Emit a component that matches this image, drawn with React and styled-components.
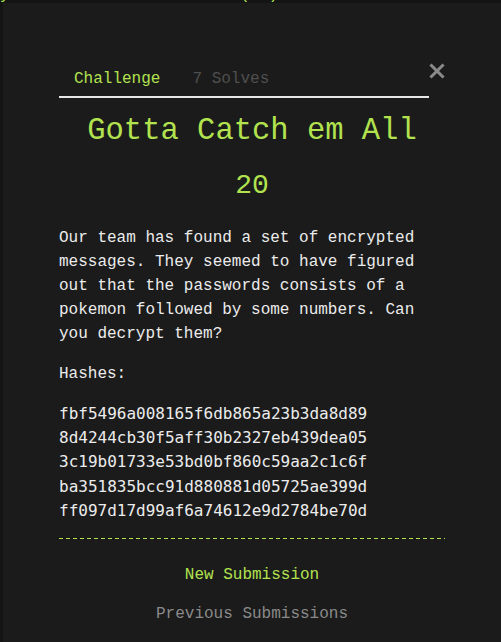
import styled, { createGlobalStyle } from "styled-components";

const GlobalStyle = createGlobalStyle`
  html, body {
    margin: 0;
    padding: 0;
    background: #141414;
    overflow: hidden;
  }
  body {
    font-family: "Liberation Mono", "DejaVu Sans Mono", monospace;
    color: #e8e8e8;
  }
`;

const green = "#b2e34f";

const BehindLine = styled.div`
  height: 3px;
  overflow: hidden;
  color: ${green};
  font-size: 16px;
  line-height: 16px;
  white-space: nowrap;

  span {
    display: block;
    margin-top: -13px;
  }
`;

const Modal = styled.div`
  margin-left: 3px;
  background: #1b1b1b;
  min-height: 642px;
  padding: 57px 56px 0 56px;
  box-sizing: border-box;
`;

const Header = styled.div`
  display: flex;
  align-items: flex-start;
`;

const Tabs = styled.nav`
  flex: 1;
  display: flex;
  gap: 32px;
  padding-left: 15px;
  height: 38px;
  border-bottom: 2px solid #e6e6e6;
  box-sizing: border-box;
`;

const Tab = styled.span`
  font-size: 16px;
  line-height: 38px;
  color: ${({ $active }) => ($active ? green : "#4f4f4f")};
`;

const Close = styled.button`
  background: none;
  border: none;
  padding: 0;
  margin: 3px 0 0 0;
  width: 16px;
  height: 16px;
  color: #8a8a8a;
  display: flex;
`;

const Title = styled.h1`
  margin: 15px 0 0 0;
  text-align: center;
  font-weight: normal;
  font-size: 30.5px;
  line-height: 36px;
  color: ${green};
`;

const Points = styled.div`
  margin-top: 19px;
  text-align: center;
  font-size: 28px;
  line-height: 36px;
  color: ${green};
`;

const Body = styled.div`
  margin-top: 22px;
  font-size: 16px;
  line-height: 24px;
  color: #ececec;

  p {
    margin: 0 0 16px 0;
  }
`;

const Hashes = styled.div`
  margin-top: 13px;
  font-family: "DejaVu Sans Mono", monospace;
  font-size: 16px;
  line-height: 24.2px;
  color: #ececec;
`;

const Dashed = styled.div`
  margin-top: 15px;
  height: 1px;
  background-image: linear-gradient(to right, ${green} 4px, transparent 4px);
  background-size: 7px 1px;
  background-repeat: repeat-x;
`;

const Actions = styled.div`
  display: flex;
  flex-direction: column;
  align-items: center;
  gap: 15px;
  margin-top: 24px;
`;

const Action = styled.button`
  background: none;
  border: none;
  padding: 0;
  font-family: inherit;
  font-size: 16px;
  line-height: 24px;
  color: ${({ $primary }) => ($primary ? green : "#8a8a8a")};
`;

const hashes = [
  "fbf5496a008165f6db865a23b3da8d89",
  "8d4244cb30f5aff30b2327eb439dea05",
  "3c19b01733e53bd0bf860c59aa2c1c6f",
  "ba351835bcc91d880881d05725ae399d",
  "ff097d17d99af6a74612e9d2784be70d",
];

export default function App() {
  return (
    <>
      <GlobalStyle />
      <BehindLine>
        <span>y the shelf and the door (50)</span>
      </BehindLine>
      <Modal>
        <Header>
          <Tabs>
            <Tab $active>Challenge</Tab>
            <Tab>7 Solves</Tab>
          </Tabs>
          <Close aria-label="close">
            <svg width="16" height="16" viewBox="0 0 16 16">
              <path
                d="M2.5 2.5 L13.5 13.5 M13.5 2.5 L2.5 13.5"
                stroke="currentColor"
                strokeWidth="3"
                strokeLinecap="square"
              />
            </svg>
          </Close>
        </Header>
        <Title>Gotta Catch em All</Title>
        <Points>20</Points>
        <Body>
          <p>
            Our team has found a set of encrypted messages. They seemed to
            have figured out that the passwords consists of a pokemon followed
            by some numbers. Can you decrypt them?
          </p>
          <p>Hashes:</p>
        </Body>
        <Hashes>
          {hashes.map((h) => (
            <div key={h}>{h}</div>
          ))}
        </Hashes>
        <Dashed />
        <Actions>
          <Action $primary>New Submission</Action>
          <Action>Previous Submissions</Action>
        </Actions>
      </Modal>
    </>
  );
}
